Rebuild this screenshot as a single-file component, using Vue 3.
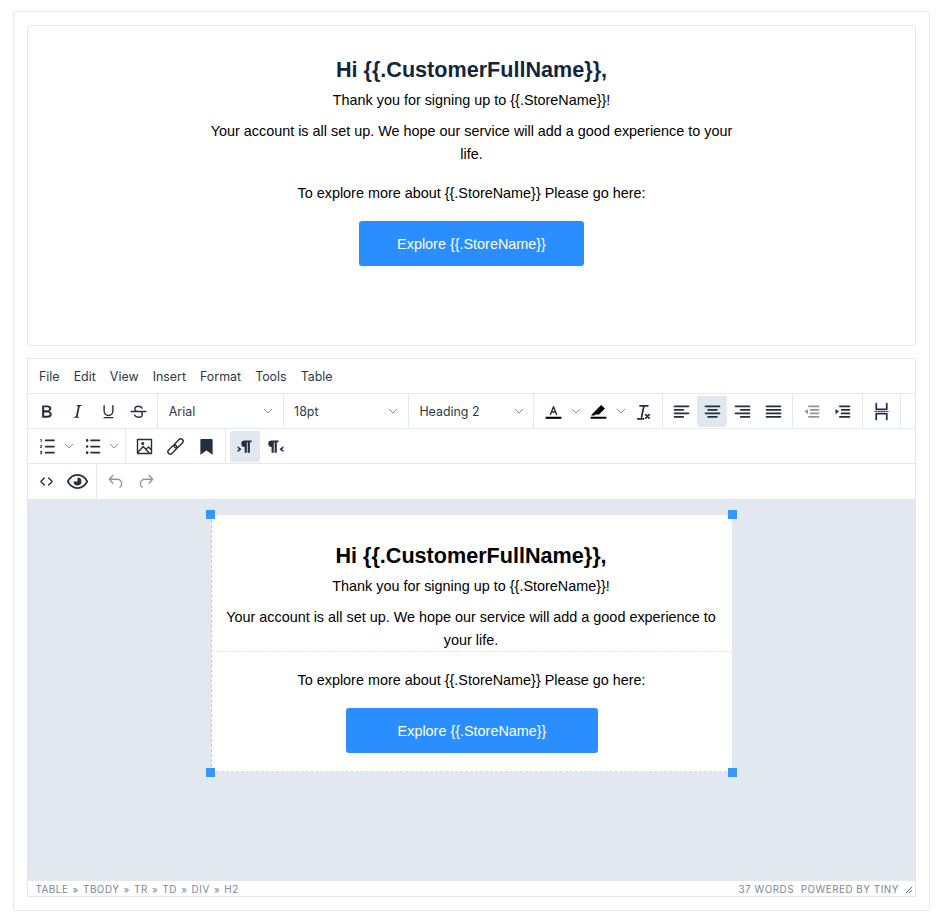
<script setup>
const I = {
  bold: { f: 'M7.8 19c-.3 0-.5 0-.6-.2l-.2-.5V5.7c0-.2 0-.4.2-.5l.6-.2h5c1.5 0 2.7.3 3.5 1 .7.6 1.1 1.4 1.1 2.5a3 3 0 0 1-.6 1.9c-.4.6-1 1-1.6 1.2.4.1.9.3 1.3.6s.8.7 1 1.2c.4.4.5 1 .5 1.6 0 1.3-.4 2.3-1.3 3-.8.7-2.1 1-3.8 1H7.8zm5-8.3c.6 0 1.2-.1 1.6-.5.4-.3.6-.7.6-1.3 0-1.1-.8-1.7-2.3-1.7H9.3v3.5h3.4zm.5 6c.7 0 1.3-.1 1.7-.4.4-.4.6-.9.6-1.500s-.2-1-.7-1.400c-.4-.3-1-.4-2-.4H9.4v3.8h4z' },
  italic: { f: 'M16.7 4.7l-.1.9h-.3c-.6 0-1 0-1.4.3-.3.3-.4.6-.5 1.1l-2.1 9.8v.6c0 .5.4.8 1.4.8h.2l-.2.8H8l.2-.8h.2c1.1 0 1.8-.5 2-1.5l2-9.8.1-.5c0-.6-.4-.8-1.4-.8h-.3l.2-.9h5.8z' },
  underline: { s: 'M7 5.500v6a5 5 0 0 0 10 0v-6M7 19h10', thin: 1 },
  strike: { s: 'M16 8.200C15.200 6.800 13.800 6 12 6c-2.500 0-4.200 1.300-4.200 3.200 0 1.300.8 2.200 2.200 2.800M15.600 13.500c.5.6.7 1.200.7 1.800 0 1.900-1.800 3.200-4.300 3.200-2 0-3.700-.8-4.600-2.500M3.500 12h17', thin: 1 },
  num: { s: 'M11 5h9.500M11 12h9.500M11 19h9.500', f: 'M5 3.500h1.500v3.500H5.500V4.500H5zM4.500 10.500H7v.8L5.600 13H7v.8H4.500V13l1.400-1.700H4.500zM4.500 17.200H7v3.600H4.500V20h1.600v-.6H5.100v-.7h1V18H4.500z' },
  bul: { s: 'M11.500 5h9.500M11.500 12h9.500M11.500 19h9.500', f: 'M7 3.500a1.500 1.500 0 1 1 0 3 1.500 1.500 0 0 1 0-3zm0 7a1.500 1.500 0 1 1 0 3 1.500 1.500 0 0 1 0-3zm0 7a1.500 1.500 0 1 1 0 3 1.500 1.500 0 0 1 0-3z' },
  image: { s: 'M4 4h16v16H4zM4.500 18.500l6-6.500 7 7.500M14 15l2.500-2.500 3.500 3.500', f: 'M10 6.800a1.800 1.800 0 1 1 0 3.600 1.800 1.800 0 0 1 0-3.600z', thin: 1 },
  link: { s: 'M14.94 12.880L19.880 7.940A2.700 2.700 0 0 0 16.060 4.120L11.120 9.060A2.700 2.700 0 0 0 14.940 12.880M9.060 11.120L4.120 16.060A2.700 2.700 0 0 0 7.940 19.880L12.880 14.940A2.700 2.700 0 0 0 9.060 11.120', thin: 1 },
  mark: { f: 'M6 3.500h12a1 1 0 0 1 1 1v17l-7-4.800L5 21.500v-17a1 1 0 0 1 1-1z' },
  ltr: { f: 'M19 5H11a3.800 3.800 0 0 0 0 7.600V19h2.500V7h1V19H17V7h2zM3 11.500L7.500 15 3 18.500v-2.300L4.800 15 3 13.800z' },
  rtl: { f: 'M15.500 5H7.500a3.800 3.800 0 0 0 0 7.600V19H10V7h1V19h2.500V7h2zM21 11.500L16.500 15l4.500 3.500v-2.300L19.200 15 21 13.800z' },
  code: { s: 'M9.500 8L5.500 12l4 4M14.500 8l4 4-4 4', thin: 1 },
  eye: { s: 'M.8 12C3.500 7 7.500 4.500 12 4.500S20.500 7 23.200 12C20.500 17 16.500 19.500 12 19.500S3.500 17 .8 12z', f: 'M12 7.500a4.500 4.500 0 1 1-4.500 4.500h4.500z' },
  undo: { s: 'M9 5L5 9.500 9 14M5.500 9.500h8.500a5 5 0 0 1 5 5v.5a4 4 0 0 1-2 3.500', thin: 1, dim: 1 },
  redo: { s: 'M15 5l4 4.500L15 14M18.500 9.500H10a5 5 0 0 0-5 5v.5a4 4 0 0 0 2 3.500', thin: 1, dim: 1 },
  color: { s: 'M8.500 15.500L12 6.500l3.500 9M9.700 12.500h4.600', f: 'M3 18h18v2.400H3z', black: 1, thin: 1 },
  hilite: { f: 'M3 18h18v2.400H3zM15 4.500l4.500 4-7 7H8.500l-1 1H3.500l3-3.500z', black: 1 },
  clear: { s: 'M8 5.500h9M12.500 5.500L9.800 18.500M5.500 20.500H12M14.500 15.500l4 4M18.500 15.500l-4 4' },
  al: { s: 'M4 6h16M4 10h10M4 14h16M4 18h10' },
  ac: { s: 'M4 6h16M7 10h10M4 14h16M7 18h10' },
  ar: { s: 'M4 6h16M10 10h10M4 14h16M10 18h10' },
  aj: { s: 'M4 6h16M4 10h16M4 14h16M4 18h16' },
  outdent: { s: 'M9 6h11M11 10h9M11 14h9M9 18h11', f: 'M8 9v6l-4-3z', dim: 1 },
  indent: { s: 'M9 6h11M11 10h9M11 14h9M9 18h11', f: 'M4 9v6l4-3z' },
  pagebreak: { s: 'M6 3v6.500h12V3M6 21v-6.500h12V21', f: 'M4 11.500h2.500v1.200H4zM7.500 11.500H10v1.200H7.500zM10.800 11.500h2.500v1.200h-2.500zM14 11.500h2.500v1.200H14zM17.500 11.500H20v1.200h-2.500z' }
}

const b = (i, on) => ({ i, on })
const sp = (i) => ({ i, split: true })
const rows = [
  [
    { items: [b('bold'), b('italic'), b('underline'), b('strike')] },
    { select: 'Arial' },
    { select: '18pt' },
    { select: 'Heading 2' },
    { items: [sp('color'), sp('hilite'), b('clear')], nudge: true },
    { items: [b('al'), b('ac', true), b('ar'), b('aj')] },
    { items: [b('outdent'), b('indent')], wide: true },
    { items: [b('pagebreak')] }
  ],
  [
    { items: [sp('num'), sp('bul')] },
    { items: [b('image'), b('link'), b('mark')], wide: true },
    { items: [b('ltr', true), b('rtl')], last: true }
  ],
  [
    { items: [b('code'), b('eye')] },
    { items: [b('undo'), b('redo')], last: true }
  ]
]
const menus = ['File', 'Edit', 'View', 'Insert', 'Format', 'Tools', 'Table']
const crumbs = 'TABLE » TBODY » TR » TD » DIV » H2'
</script>

<template>
  <div class="page">
    <div class="preview">
      <div class="mail mail-top">
        <div class="part first">
          <h2>Hi {{ '{{' }}.CustomerFullName}},</h2>
          <p class="tight">Thank you for signing up to {{ '{{' }}.StoreName}}!</p>
          <p>Your account is all set up. We hope our service will add a good experience to your life.</p>
        </div>
        <div class="part second">
          <p>To explore more about {{ '{{' }}.StoreName}} Please go here:</p>
          <a class="cta">Explore {{ '{{' }}.StoreName}}</a>
        </div>
      </div>
    </div>

    <div class="editor">
      <div class="menubar">
        <span v-for="m in menus" :key="m" class="menu">{{ m }}</span>
      </div>
      <div v-for="(row, r) in rows" :key="r" class="row" :class="{ lastrow: r === 2 }">
        <template v-for="(g, k) in row" :key="k">
          <div v-if="g.select" class="select">
            <span>{{ g.select }}</span>
            <svg class="chev" viewBox="0 0 10 6"><path d="M1 1l4 4 4-4" /></svg>
          </div>
          <div v-else class="group" :class="{ last: g.last, wide: g.wide, nudge: g.nudge }">
            <template v-for="it in g.items" :key="it.i">
              <div class="btn" :class="{ on: it.on, dim: I[it.i].dim, cut: it.split }">
                <svg class="ico" viewBox="0 0 24 24">
                  <path v-if="I[it.i].f" class="pf" :class="{ black: I[it.i].black }" :d="I[it.i].f" />
                  <path v-if="I[it.i].s" class="ps" :class="{ thin: I[it.i].thin }" :d="I[it.i].s" />
                </svg>
              </div>
              <div v-if="it.split" class="caret">
                <svg class="chev" viewBox="0 0 10 6"><path d="M1 1l4 4 4-4" /></svg>
              </div>
            </template>
          </div>
        </template>
      </div>

      <div class="canvas">
        <div class="mail mail-edit">
          <div class="part first dashed">
            <h2>Hi {{ '{{' }}.CustomerFullName}},</h2>
            <p class="tight">Thank you for signing up to {{ '{{' }}.StoreName}}!</p>
            <p>Your account is all set up. We hope our service will add a good experience to your life.</p>
          </div>
          <div class="part second">
            <p>To explore more about {{ '{{' }}.StoreName}} Please go here:</p>
            <a class="cta">Explore {{ '{{' }}.StoreName}}</a>
          </div>
          <i class="handle tl"></i><i class="handle tr"></i><i class="handle bl"></i><i class="handle br"></i>
        </div>
      </div>

      <div class="status">
        <span class="path">{{ crumbs }}</span>
        <span class="right">37 WORDS&nbsp; POWERED BY TINY</span>
        <svg class="grip" viewBox="0 0 10 10"><path d="M1 9l8-8M5 9l4-4" /></svg>
      </div>
    </div>
  </div>
</template>

<style>
html, body { background: #fff; }
</style>

<style scoped>
.page {
  box-sizing: border-box;
  width: 917px;
  height: 900px;
  margin: 11px 0 0 13px;
  padding: 13px;
  border: 1px solid #e2e8f0;
  border-radius: 3px;
  display: flex;
  flex-direction: column;
  gap: 12px;
  font-family: Inter, "Liberation Sans", sans-serif;
}
.preview {
  box-sizing: border-box;
  height: 321px;
  border: 1px solid #e2e8f0;
  border-radius: 3px;
  display: flex;
  justify-content: center;
  padding-top: 3px;
}
.mail {
  font-family: "Liberation Sans", Arial, sans-serif;
  text-align: center;
  color: #000;
}
.mail h2 {
  margin: 0;
  font-size: 21.6px;
  line-height: 31px;
  font-weight: 700;
}
.mail p {
  margin: 0;
  font-size: 14.4px;
  line-height: 23px;
}
.mail .tight { margin: 4px 0 8px; }
.part.first { padding-top: 25px; }
.part.second { padding-top: 17px; }
.part.second p { margin-bottom: 16px; }
.cta {
  display: block;
  height: 45px;
  line-height: 46px;
  margin: 0 auto;
  background: #2b8eff;
  color: #fff;
  border-radius: 3px;
  font-size: 14.4px;
}
.mail-top { width: 530px; }
.mail-top h2 { color: #12263f; }
.mail-top .cta { width: 225px; }
.mail-top .part.second { padding-top: 16px; }

.editor {
  box-sizing: border-box;
  height: 540px;
  border: 1px solid #e2e8f0;
  display: flex;
  flex-direction: column;
  color: #2c3847;
}
.menubar {
  box-sizing: border-box;
  height: 35px;
  border-bottom: 1px solid #e2e8f0;
  display: flex;
  align-items: center;
  padding: 2px 0 0 11px;
  gap: 14.1px;
  font-size: 12.4px;
}
.row {
  box-sizing: border-box;
  height: 35px;
  display: flex;
  align-items: flex-start;
  border-bottom: 1px solid #e2e8f0;
}
.row.lastrow { border-bottom: 0; }
.group {
  box-sizing: content-box;
  height: 35px;
  display: flex;
  padding: 0 3.2px 0 3.5px;
  border-right: 1px solid #e2e8f0;
}
.group.wide { padding: 0 3.8px; }
.group.nudge { padding: 0 2.8px 0 3.9px; }
.group.last { border-right: 0; }
.select {
  box-sizing: border-box;
  width: 125.3px;
  height: 35px;
  padding: 0 9.5px 0 10.5px;
  display: flex;
  align-items: center;
  justify-content: space-between;
  border-right: 1px solid #e2e8f0;
  font-size: 12.4px;
}
.btn {
  width: 30.67px;
  height: 31px;
  margin-top: 2px;
  border-radius: 3px;
  display: flex;
  align-items: center;
  justify-content: center;
}
.btn.on { background: #e2e8f0; }
.btn.dim { opacity: .5; }
.btn.cut { width: 30px; }
.caret {
  width: 15px;
  height: 31px;
  margin-top: 2px;
  display: flex;
  align-items: center;
  justify-content: center;
}
.ico { width: 21px; height: 21px; }
.pf { fill: #222f3e; }
.pf.black { fill: #000; }
.ps {
  fill: none;
  stroke: #222f3e;
  stroke-width: 2;
  stroke-linecap: round;
  stroke-linejoin: round;
}
.ps.thin { stroke-width: 1.6; }
.chev {
  width: 10px;
  height: 6px;
  fill: none;
  stroke: #8592a3;
  stroke-width: 1;
}
.canvas {
  flex: 1;
  background: #e2e8f0;
  padding-top: 16px;
  display: flex;
  justify-content: center;
  align-items: flex-start;
}
.mail-edit {
  box-sizing: border-box;
  position: relative;
  width: 521px;
  height: 257px;
  background: #fff;
  border-left: 1px dashed #a9cdf5;
  border-bottom: 1px dashed #d5dde6;
}
.mail-edit .part { padding-left: 14px; padding-right: 16px; }
.mail-edit .first { height: 137px; box-sizing: border-box; border-bottom: 1px dashed #e2e8f0; }
.mail-edit .second { padding-left: 15px; padding-right: 15px; }
.mail-edit .second p { position: relative; left: -0.5px; }
.mail-edit .cta { width: 252px; }
.handle {
  position: absolute;
  width: 9px;
  height: 9px;
  background: #3a96ff;
}
.tl { left: -6px; top: -5px; }
.tr { right: -5px; top: -5px; }
.bl { left: -6px; bottom: -6px; }
.br { right: -5px; bottom: -6px; }
.status {
  position: relative;
  box-sizing: border-box;
  height: 15px;
  display: flex;
  justify-content: space-between;
  align-items: center;
  padding: 2px 16px 0 7.5px;
  font-size: 9.8px;
  letter-spacing: .55px;
  color: #7b8794;
}
.path { word-spacing: .9px; }
.grip {
  position: absolute;
  right: 2px;
  bottom: 2px;
  width: 8px;
  height: 8px;
  fill: none;
  stroke: #444;
  stroke-width: 1;
}
</style>
